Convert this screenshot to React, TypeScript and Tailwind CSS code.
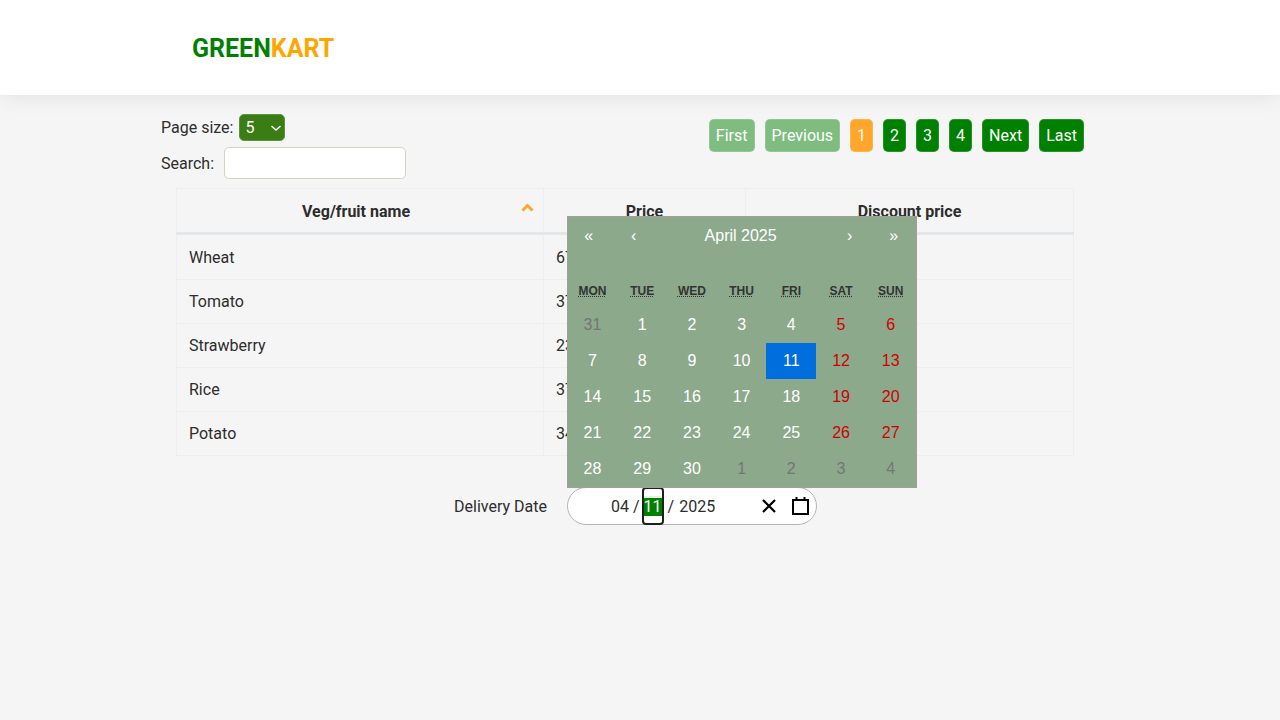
import React from "react";

const rows = [
  ["Wheat", "67", "52"],
  ["Tomato", "37", "26"],
  ["Strawberry", "23", "14"],
  ["Rice", "37", "21"],
  ["Potato", "34", "22"],
];

const weekdays = ["Mon", "Tue", "Wed", "Thu", "Fri", "Sat", "Sun"];

const days: { d: number; muted?: boolean; now?: boolean }[] = [
  { d: 31, muted: true },
  ...Array.from({ length: 30 }, (_, i) => ({ d: i + 1, now: i + 1 === 11 })),
  { d: 1, muted: true },
  { d: 2, muted: true },
  { d: 3, muted: true },
  { d: 4, muted: true },
];

function PageBtn({ label, kind }: { label: string; kind: "off" | "on" | "cur" }) {
  const cls = kind === "off" ? "bg-[#7fbc7f]" : kind === "cur" ? "bg-[#ffa62b]" : "bg-[#008000]";
  return (
    <button className={`h-[33px] px-[6px] rounded-[5px] border border-white/15 text-white text-base leading-none ${cls}`}>
      {label}
    </button>
  );
}

function Calendar() {
  return (
    <div className="absolute -left-[1.4px] bottom-full w-[350px] h-[272px] bg-[#8ca98c] text-white font-['Liberation_Sans',Arial,sans-serif] border border-[#a0a096]">
      <div className="flex h-[37px] items-center text-base">
        <span className="w-[44px] text-center pr-[2px]">«</span>
        <span className="w-[44px] text-center">‹</span>
        <span className="flex-1 text-center pr-[2px]">April 2025</span>
        <span className="w-[44px] text-center">›</span>
        <span className="w-[44px] text-center">»</span>
      </div>
      <div className="h-[21px]" />
      <div className="grid grid-cols-7 h-[31px] mb-px items-center">
        {weekdays.map((w) => (
          <abbr
            key={w}
            title={w}
            className="text-center uppercase font-bold text-xs text-[#333333] underline decoration-dotted"
          >
            {w}
          </abbr>
        ))}
      </div>
      <div className="grid grid-cols-7">
        {days.map((x, i) => {
          const weekend = i % 7 >= 5;
          const color = x.muted ? "text-[#757575]" : weekend ? "text-[#d10000]" : "text-white";
          return (
            <div
              key={i}
              className={`h-[36px] flex items-center justify-center text-base ${color} ${x.now && !x.muted ? "bg-[#006edc]" : ""}`}
            >
              {x.d}
            </div>
          );
        })}
      </div>
    </div>
  );
}

const thCls = "border border-[#eeeeee] border-b-[3px] border-b-[#e4e7ea] font-bold pt-[2px]";

export default function App() {
  return (
    <div className="min-h-[720px] bg-[#f5f5f5] text-[#2d2d2d] font-['Roboto',sans-serif] text-base">
      <header className="h-[95px] bg-white shadow-[0_2px_20px_rgba(0,0,0,0.08)] flex items-center pl-[192px] pt-[3px] text-[25px] font-bold">
        <span className="text-[#008000]">GREEN</span>
        <span className="text-[#ffa500]">KART</span>
      </header>

      <main className="ml-[161px] w-[923px] pt-[19px]">
        <div className="flex justify-between">
          <div>
            <div className="flex items-center h-[27px] gap-[6px]">
              <span>Page size:</span>
              <div className="w-[46px] h-[27px] bg-[#3a7d14] rounded-[5px] border border-[#5c9440] text-white flex items-center pl-[5px] justify-between">
                <span>5</span>
                <svg width="16" height="16" viewBox="0 0 16 16" fill="none" stroke="currentColor" strokeWidth="1.6" strokeLinecap="round" strokeLinejoin="round">
                  <path d="M4 6.5l4 3.5 4-3.5" />
                </svg>
              </div>
            </div>
            <div className="flex items-center gap-[10px] mt-[6px] h-[32px]">
              <span className="pt-[1px]">Search:</span>
              <input className="w-[182px] h-[32px] bg-white border border-[#d3d3c6] rounded-[5px]" />
            </div>
          </div>
          <div className="flex gap-[10px] pt-[5px] h-[39px] items-start">
            <PageBtn label="First" kind="off" />
            <PageBtn label="Previous" kind="off" />
            <PageBtn label="1" kind="cur" />
            <PageBtn label="2" kind="on" />
            <PageBtn label="3" kind="on" />
            <PageBtn label="4" kind="on" />
            <PageBtn label="Next" kind="on" />
            <PageBtn label="Last" kind="on" />
          </div>
        </div>

        <table className="ml-[15px] mt-[9px] w-[897px] table-fixed border-collapse">
          <colgroup>
            <col className="w-[367px]" />
            <col className="w-[202px]" />
            <col className="w-[328px]" />
          </colgroup>
          <thead>
            <tr className="h-[45px]">
              <th className={`relative pr-[8px] ${thCls}`}>
                Veg/fruit name
                <svg className="absolute right-[9px] top-[14px]" width="13" height="9" viewBox="0 0 13 9" fill="none" stroke="#ffa62b" strokeWidth="3">
                  <path d="M1.5 7.5l5-5 5 5" />
                </svg>
              </th>
              <th className={thCls}>Price</th>
              <th className={thCls}>Discount price</th>
            </tr>
          </thead>
          <tbody>
            {rows.map((r, n) => (
              <tr key={r[0]} className={n === 0 ? "h-[46px]" : "h-[44px]"}>
                {r.map((c, i) => (
                  <td key={i} className={`border border-[#eeeeee] px-3 ${n === 0 ? "pt-px" : ""}`}>
                    {c}
                  </td>
                ))}
              </tr>
            ))}
          </tbody>
        </table>

        <div className="flex items-center mt-[31px] ml-[293px] h-[38px]">
          <span className="w-[113px] pt-px">Delivery Date</span>
          <div className="relative w-[250px] h-[38px] bg-white border border-[#b5b5b5] rounded-[19px] flex items-center">
            <span className="ml-[43px] pt-px">04</span>
            <span className="ml-[4px] pt-px">/</span>
            <span className="ml-[2px] w-[22px] h-[38px] -my-px flex items-center justify-center rounded-[4px] border-2 border-[#1f1f1f]">
              <span className="w-[18px] h-[20px] bg-[#e6f0e6] pt-[2px] flex flex-col">
                <span className="h-[18px] bg-[#008000] flex items-center justify-center text-white">11</span>
              </span>
            </span>
            <span className="ml-[4px] pt-px">/</span>
            <span className="ml-[5px] pt-px">2025</span>
            <svg className="ml-[47px]" width="14" height="14" viewBox="0 0 14 14" stroke="black" strokeWidth="2.2">
              <path d="M1 1l12 12M13 1L1 13" />
            </svg>
            <svg className="ml-[16px] mb-px" width="17" height="18" viewBox="0 0 17 18" fill="none" stroke="black" strokeWidth="2">
              <rect x="1" y="3" width="15" height="14" />
              <path d="M4.5 0v3M12.5 0v3" />
            </svg>
            <Calendar />
          </div>
        </div>
      </main>
    </div>
  );
}
